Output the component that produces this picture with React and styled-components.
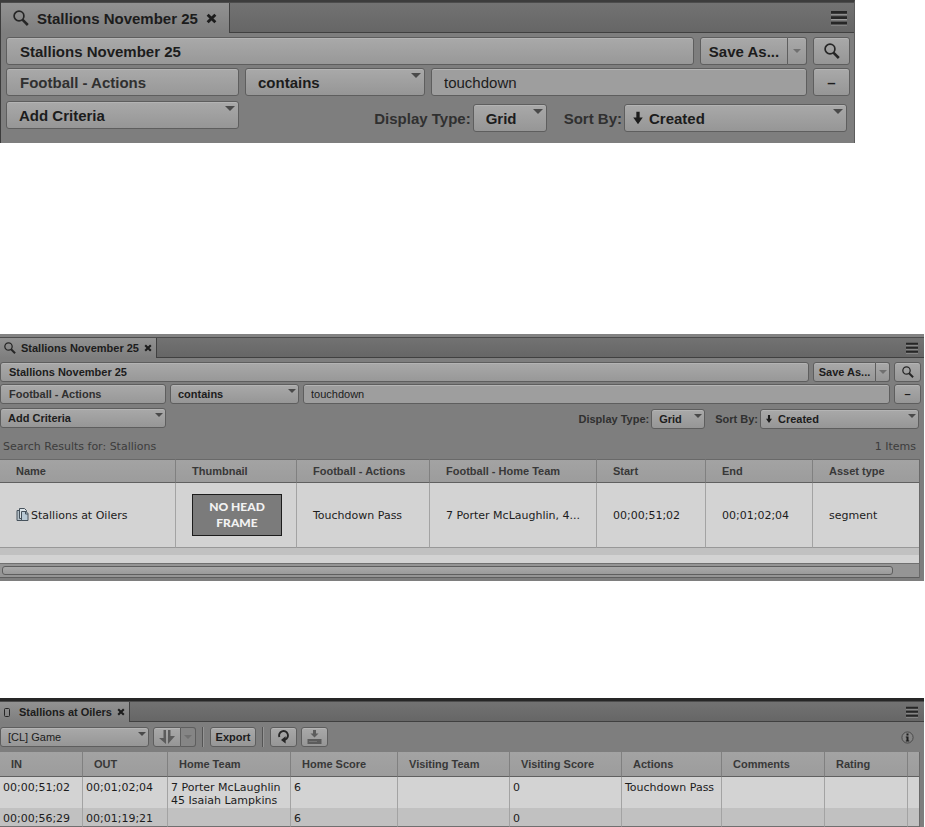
import styled, { createGlobalStyle, css, ThemeProvider } from 'styled-components'

const GlobalStyle = createGlobalStyle`
  * {
    box-sizing: border-box;
  }

  body {
    margin: 0;
    background: #fff;
    color: #1c1c1c;
    font-family: 'Liberation Sans', Arial, sans-serif;
  }

  button, input, select {
    margin: 0;
    font-family: inherit;
  }
`

const large = {
  font: 15,
  control: 28,
  tabBar: 30,
  tabPad: 12,
  tabGap: 8,
  menuPad: 7,
  inset: 5,
  edge: 4,
  gap: 6,
  rowGap: 3,
  pad: 13,
  field: 233,
  operator: 180,
  save: 88,
  saveMenu: 19,
  square: 37,
  grid: 74,
  sort: 223,
  sortGap: 15,
  sortLeft: 9,
  sortPad: 24,
  optionsTop: 3,
  optionsEnd: 3,
  icon: 16,
  close: 11,
  arrow: 5,
}

const small = {
  font: 11,
  control: 20,
  tabBar: 20,
  tabPad: 4,
  tabGap: 5,
  menuPad: 6,
  inset: 0,
  edge: 3,
  gap: 4,
  rowGap: 2,
  pad: 8,
  field: 166,
  operator: 129,
  save: 63,
  saveMenu: 14,
  square: 27,
  grid: 54,
  sort: 159,
  sortGap: 8,
  sortLeft: 6,
  sortPad: 17,
  optionsTop: 1,
  optionsEnd: 2,
  icon: 12,
  close: 8,
  arrow: 4,
}

const SearchIcon = () => (
  <Icon viewBox="0 0 16 16" aria-hidden="true">
    <circle cx="6" cy="6" r="4.9" fill="none" stroke="#262626" strokeWidth="1.7" />
    <path d="M9.4 9.6L14.8 15" stroke="#262626" strokeWidth="2.6" />
  </Icon>
)

const ClipIcon = () => (
  <svg width="10" height="11" viewBox="0 0 10 11" aria-hidden="true">
    <rect x=".5" y="1.5" width="5" height="8" rx="1" fill="none" stroke="#262626" />
  </svg>
)

const CloseIcon = () => (
  <CloseGlyph viewBox="0 0 10 10" aria-hidden="true">
    <path d="M1.5 1.5L8.5 8.5M8.5 1.5L1.5 8.5" stroke="#1c1c1c" strokeWidth="2.6" />
  </CloseGlyph>
)

const MenuIcon = () => (
  <MenuGlyph viewBox="0 0 15 15" aria-hidden="true">
    <path d="M0 4H15M0 9H15M0 14H15" stroke="#9a9a9a" />
    <path d="M0 2.2H15M0 7.2H15M0 12.2H15" stroke="#262626" strokeWidth="2.6" />
  </MenuGlyph>
)

const SegmentIcon = () => (
  <svg width="13" height="14" viewBox="0 0 13 14" aria-hidden="true">
    <path d="M1 2.5h5v10H1z" fill="#b4c0c8" stroke="#46525c" />
    <path d="M3.5 .5h5l2 2v8h-7z" fill="#dbe3e8" stroke="#46525c" />
    <path d="M5.5 3.5h4.5l2 2v7H5.5z" fill="#b9cad6" stroke="#46525c" />
    <path d="M9.5 3.5v2.5H12" fill="none" stroke="#46525c" />
  </svg>
)

const TransferIcon = () => (
  <svg width="16" height="14" viewBox="0 0 16 14" aria-hidden="true">
    <path d="M4.5 0H7v14L0 8h4.5z" fill="#5c5c5c" />
    <path d="M9 0h2.500v6H16L9 14z" fill="#5c5c5c" />
  </svg>
)

const RefreshIcon = () => (
  <svg width="13" height="14" viewBox="0 0 13 14" aria-hidden="true">
    <path
      d="M2.4 7A4.4 4.4 0 1 1 8 9.600"
      fill="none"
      stroke="#262626"
      strokeWidth="1.9"
    />
    <path d="M8.6 6.2v7.400L4 9.900z" fill="#262626" />
  </svg>
)

const DownloadIcon = () => (
  <svg width="15" height="14" viewBox="0 0 15 14" aria-hidden="true">
    <path d="M6 0h3v3.500h2.500l-4 4-4-4H6z" fill="#5c5c5c" />
    <rect x=".5" y="9" width="14" height="5" fill="#5c5c5c" />
    <path d="M2 11.500h8" stroke="#757575" />
  </svg>
)

const InfoIcon = () => (
  <svg width="13" height="13" viewBox="0 0 13 13" aria-hidden="true">
    <circle cx="6.5" cy="6.5" r="5.6" fill="#858585" stroke="#4a4a4a" />
    <path d="M5.5 2.5h2v2h-2zM4.800 5.400h2.700v4.200h.8v1H4.800v-1h.7V6.400h-.7z" fill="#1c1c1c" />
  </svg>
)

const SortArrow = () => (
  <SortGlyph viewBox="0 0 8 11" aria-hidden="true">
    <path d="M2.6 0h2.800v5H8L4 10.800 0 5h2.600z" fill="#1c1c1c" />
  </SortGlyph>
)

const PanelTabs = ({ title, icon }) => (
  <TabBar>
    <Tab>
      {icon}
      {title}
      <BareButton aria-label={`Close ${title}`}>
        <CloseIcon />
      </BareButton>
    </Tab>
    <TabSpace>
      <BareButton aria-label="Panel menu">
        <MenuIcon />
      </BareButton>
    </TabSpace>
  </TabBar>
)

const Dropdown = ({ id, label, value, kind, sorted }) => (
  <SelectBox $kind={kind}>
    <Select id={id} aria-label={label} $sorted={sorted} $light={kind === 'clip'}>
      <option>{value}</option>
    </Select>
    {sorted && <SortArrow />}
  </SelectBox>
)

const SearchForm = ({ id }) => (
  <Form onSubmit={(e) => e.preventDefault()}>
    <Row>
      <Input aria-label="Search name" defaultValue="Stallions November 25" $bold />
      <Split>
        <SaveButton type="button">Save As...</SaveButton>
        <SaveMenu type="button" aria-label="Save options" />
      </Split>
      <SquareButton aria-label="Search">
        <SearchIcon />
      </SquareButton>
    </Row>
    <Row>
      <FieldName aria-label="Field" value="Football - Actions" readOnly $bold />
      <Dropdown kind="operator" label="Operator" value="contains" />
      <Input aria-label="Value" defaultValue="touchdown" />
      <SquareButton type="button" aria-label="Remove criteria">
        –
      </SquareButton>
    </Row>
    <OptionsRow>
      <Dropdown kind="field" label="Add criteria" value="Add Criteria" />
      <Options>
        <Label htmlFor={`${id}-display`}>Display Type:</Label>
        <Dropdown id={`${id}-display`} kind="grid" value="Grid" />
        <SortLabel htmlFor={`${id}-sort`}>Sort By:</SortLabel>
        <Dropdown id={`${id}-sort`} kind="sort" value="Created" sorted />
      </Options>
    </OptionsRow>
  </Form>
)

const resultColumns = [
  ['Name', 176],
  ['Thumbnail', 121],
  ['Football - Actions', 133],
  ['Football - Home Team', 167],
  ['Start', 109],
  ['End', 107],
  ['Asset type'],
]

const logColumns = [
  ['IN', 83],
  ['OUT', 85],
  ['Home Team', 123],
  ['Home Score', 107],
  ['Visiting Team', 112],
  ['Visiting Score', 112],
  ['Actions', 100],
  ['Comments', 103],
  ['Rating', 83],
  [''],
]

const logRows = [
  [
    '00;00;51;02',
    '00;01;02;04',
    '7 Porter McLaughlin\n45 Isaiah Lampkins',
    '6',
    '',
    '0',
    'Touchdown Pass',
    '',
    '',
    '',
  ],
  ['00;00;56;29', '00;01;19;21', '', '6', '', '0', '', '', '', ''],
]

const TableHead = ({ columns }) => (
  <>
    <colgroup>
      {columns.map(([name, width]) => (
        <col key={name} width={width} />
      ))}
    </colgroup>
    <thead>
      <tr>
        {columns.map(([name]) => (
          <th key={name}>{name}</th>
        ))}
      </tr>
    </thead>
  </>
)

const App = () => (
  <Page>
    <GlobalStyle />

    <ThemeProvider theme={large}>
      <QueryPanel>
        <PanelTabs title="Stallions November 25" icon={<SearchIcon />} />
        <SearchForm id="query" />
      </QueryPanel>
    </ThemeProvider>

    <ThemeProvider theme={small}>
      <ResultsPanel>
        <PanelTabs title="Stallions November 25" icon={<SearchIcon />} />
        <SearchForm id="results" />
        <Summary>
          <span>Search Results for: Stallions</span>
          <span>1 Items</span>
        </Summary>
        <TableFrame>
          <ResultsTable>
            <TableHead columns={resultColumns} />
            <tbody>
              <tr>
                <td>
                  <Asset>
                    <SegmentIcon />
                    Stallions at Oilers
                  </Asset>
                </td>
                <td>
                  <Thumbnail>NO HEAD FRAME</Thumbnail>
                </td>
                <td>Touchdown Pass</td>
                <td>7 Porter McLaughlin, 4...</td>
                <td>00;00;51;02</td>
                <td>00;01;02;04</td>
                <td>segment</td>
              </tr>
            </tbody>
          </ResultsTable>
          <EmptyRow />
          <ScrollTrack>
            <ScrollThumb />
          </ScrollTrack>
        </TableFrame>
      </ResultsPanel>

      <LogPanel>
        <PanelTabs title="Stallions at Oilers" icon={<ClipIcon />} />
        <Toolbar>
          <Dropdown kind="clip" label="Log type" value="[CL] Game" />
          <TransferSplit>
            <ToolButton $width={28} aria-label="Transfer">
              <TransferIcon />
            </ToolButton>
            <TransferMenu aria-label="Transfer options" />
          </TransferSplit>
          <Divider />
          <ToolButton $width={46}>Export</ToolButton>
          <Divider />
          <ToolButton $width={27} aria-label="Refresh">
            <RefreshIcon />
          </ToolButton>
          <ToolButton $width={27} aria-label="Download">
            <DownloadIcon />
          </ToolButton>
          <InfoButton aria-label="Info">
            <InfoIcon />
          </InfoButton>
        </Toolbar>
        <TableFrame>
          <LogTable>
            <TableHead columns={logColumns} />
            <tbody>
              {logRows.map((row) => (
                <tr key={row[0]}>
                  {row.map((cell, i) => (
                    <td key={i}>{cell}</td>
                  ))}
                </tr>
              ))}
            </tbody>
          </LogTable>
        </TableFrame>
      </LogPanel>
    </ThemeProvider>
  </Page>
)

export default App

const Page = styled.main`
  display: flex;
  flex-direction: column;
`

const Panel = styled.section`
  background: #7e7e7e;
  font-size: ${({ theme }) => theme.font}px;
  font-weight: bold;
`

const QueryPanel = styled(Panel)`
  margin-right: 70px;
  padding-bottom: 11px;
  border-top: 2px solid #3c3c3c;
  border-left: 1px solid #3c3c3c;
  border-right: 1px solid #5c5c5c;
`

const ResultsPanel = styled(Panel)`
  margin: 191px 1px 0 0;
  padding-bottom: 3px;
  border-top: 3px solid #838383;
`

const LogPanel = styled(Panel)`
  margin: 117px 1px 0 0;
  border-top: 3px solid #262626;
`

const TabBar = styled.header`
  display: flex;
  height: ${({ theme }) => theme.tabBar + 1}px;
  border-top: 1px solid #4c4c4c;
`

const Tab = styled.div`
  display: flex;
  align-items: center;
  gap: ${({ theme }) => theme.tabGap}px;
  padding: 0 ${({ theme }) => theme.tabPad}px;
  background: linear-gradient(#929292, #7e7e7e);
  white-space: nowrap;
`

const TabSpace = styled.div`
  display: flex;
  flex: 1;
  align-items: center;
  justify-content: flex-end;
  padding-right: ${({ theme }) => theme.menuPad}px;
  border-left: 1px solid #404040;
  border-bottom: 1px solid #404040;
  background: linear-gradient(#727272, #666);
`

const BareButton = styled.button`
  display: flex;
  padding: 0;
  border: 0;
  background: none;
`

const Icon = styled.svg`
  flex: none;
  width: ${({ theme }) => theme.icon}px;
  height: ${({ theme }) => theme.icon}px;
`

const CloseGlyph = styled.svg`
  width: ${({ theme }) => theme.close}px;
  height: ${({ theme }) => theme.close}px;
`

const MenuGlyph = styled.svg`
  width: ${({ theme }) => theme.icon}px;
  height: ${({ theme }) => theme.icon}px;
`

const SortGlyph = styled.svg`
  position: absolute;
  top: 50%;
  left: ${({ theme }) => theme.sortLeft}px;
  width: ${({ theme }) => theme.font - 5}px;
  height: ${({ theme }) => theme.font - 2}px;
  transform: translateY(-50%);
  pointer-events: none;
`

const Form = styled.form`
  display: flex;
  flex-direction: column;
  gap: ${({ theme }) => theme.rowGap}px;
  padding: 4px ${({ theme }) => theme.edge}px 0 ${({ theme }) => theme.inset}px;
`

const Row = styled.div`
  display: flex;
  gap: ${({ theme }) => theme.gap}px;
`

const OptionsRow = styled(Row)`
  align-items: flex-start;
  justify-content: space-between;
  padding-top: 2px;
`

const Options = styled.div`
  display: flex;
  align-items: center;
  gap: 2px;
  padding: ${({ theme }) => `${theme.optionsTop}px ${theme.optionsEnd}px 0 0`};
`

const Label = styled.label`
  color: #303030;
  white-space: nowrap;
`

const SortLabel = styled(Label)`
  padding-left: ${({ theme }) => theme.sortGap}px;
`

const surface = css`
  height: ${({ theme }) => theme.control}px;
  border: 1px solid #5e5e5e;
  border-radius: 3px;
  background: linear-gradient(#a9a9a9, #969696);
  box-shadow: inset 0 1px #b4b4b4;
  color: #1c1c1c;
  font-size: ${({ theme }) => theme.font}px;
  font-weight: bold;
`

const Input = styled.input`
  ${surface}
  flex: 1;
  min-width: 0;
  padding: 0 ${({ theme, $bold }) => ($bold ? theme.pad : theme.pad - 1)}px;
  font-weight: ${({ $bold }) => ($bold ? 'bold' : 'normal')};
  background: ${({ $bold }) => ($bold ? 'linear-gradient(#a9a9a9, #989898)' : '#9e9e9e')};
`

const FieldName = styled(Input)`
  flex: 0 0 ${({ theme }) => theme.field}px;
  color: #303030;
`

const SelectBox = styled.div`
  position: relative;
  flex: none;
  width: ${({ theme, $kind }) => ($kind === 'clip' ? 149 : theme[$kind])}px;

  &::after {
    content: '';
    position: absolute;
    top: 5px;
    right: ${({ theme }) => theme.arrow - 1}px;
    border: ${({ theme }) => theme.arrow}px solid transparent;
    border-top-color: #4a4a4a;
    border-bottom: 0;
    pointer-events: none;
  }
`

const Select = styled.select`
  ${surface}
  appearance: none;
  display: block;
  width: 100%;
  padding: 0 0 0
    ${({ theme, $sorted }) => ($sorted ? theme.sortPad : theme.pad - 1)}px;
  font-weight: ${({ $light }) => ($light ? 'normal' : 'bold')};
`

const Button = styled.button`
  ${surface}
  display: flex;
  flex: none;
  align-items: center;
  justify-content: center;
  padding: 0;
`

const Split = styled.div`
  display: flex;
`

const SaveButton = styled(Button)`
  width: ${({ theme }) => theme.save}px;
  border-radius: 3px 0 0 3px;
`

const menuArrow = css`
  border-left: 0;
  border-radius: 0 3px 3px 0;

  &::after {
    content: '';
    border: 4px solid transparent;
    border-top-color: #707070;
    border-bottom: 0;
  }
`

const SaveMenu = styled(Button)`
  width: ${({ theme }) => theme.saveMenu}px;
  ${menuArrow}
`

const SquareButton = styled(Button)`
  width: ${({ theme }) => theme.square}px;
`

const Summary = styled.div`
  display: flex;
  justify-content: space-between;
  padding: 10px 8px 4px 3px;
  color: #3c3c3c;
  font: 11px/16px 'DejaVu Sans', Verdana, sans-serif;
`

const TableFrame = styled.div`
  margin-right: 4px;
  border-right: 1px solid #696969;
`

const Table = styled.table`
  width: 100%;
  border-collapse: separate;
  border-spacing: 0;
  table-layout: fixed;

  th {
    padding: 0 0 0 16px;
    border-right: 1px solid #808080;
    border-bottom: 1px solid #606060;
    background: linear-gradient(#a3a3a3, #9c9c9c);
    color: #383838;
    font-size: 11px;
    text-align: left;
    white-space: nowrap;
  }

  td {
    border-right: 1px solid #a3a3a3;
    color: #1c1c1c;
    font: 11px/13px 'DejaVu Sans', Verdana, sans-serif;
  }

  th:last-child,
  td:last-child {
    border-right: 0;
  }
`

const ResultsTable = styled(Table)`
  th {
    height: 24px;
    border-top: 1px solid #696969;
  }

  td {
    height: 65px;
    padding: 0 0 0 16px;
    border-bottom: 1px solid #989898;
    background: #d3d3d3;
    white-space: nowrap;
  }
`

const Asset = styled.span`
  display: flex;
  align-items: center;
  gap: 2px;
`

const Thumbnail = styled.div`
  width: 90px;
  height: 42px;
  padding: 4px 16px;
  border: 1px solid #1c1c1c;
  background: #7b7b7b;
  color: #f2f2f2;
  font: 900 12px/16px Lato, 'Open Sans', sans-serif;
  text-align: center;
  white-space: normal;
`

const EmptyRow = styled.div`
  height: 16px;
  border-bottom: 1px solid #707070;
  background: linear-gradient(#c1c1c1 50%, #d3d3d3 50%);
`

const ScrollTrack = styled.div`
  padding: 2px 26px 2px 2px;
  border-bottom: 1px solid #5e5e5e;
  background: #959595;
`

const ScrollThumb = styled.div`
  height: 9px;
  border: 1px solid #5e5e5e;
  border-radius: 3px;
  background: linear-gradient(#a9a9a9, #9a9a9a);
`

const Toolbar = styled.div`
  display: flex;
  align-items: center;
  gap: 4px;
  height: 30px;
  padding-right: 10px;
`

const ToolButton = styled(Button)`
  width: ${({ $width }) => $width}px;
`

const TransferSplit = styled(Split)`
  ${ToolButton} {
    border-radius: 3px 0 0 3px;
  }
`

const TransferMenu = styled(Button)`
  width: 15px;
  background: #858585;
  box-shadow: none;
  ${menuArrow}
`

const Divider = styled.span`
  width: 2px;
  height: 20px;
  margin: 0 2px;
  border-left: 1px solid #555;
  border-right: 1px solid #949494;
`

const InfoButton = styled(BareButton)`
  margin-left: auto;
`

const LogTable = styled(Table)`
  th {
    height: 25px;
    padding-left: 11px;
  }

  td {
    height: 18px;
    padding: 4px 0 1px 3px;
    background: #d3d3d3;
    vertical-align: top;
    white-space: pre;
  }

  tr:nth-child(even) td {
    background: #c1c1c1;
    border-bottom: 1px solid #707070;
  }
`
